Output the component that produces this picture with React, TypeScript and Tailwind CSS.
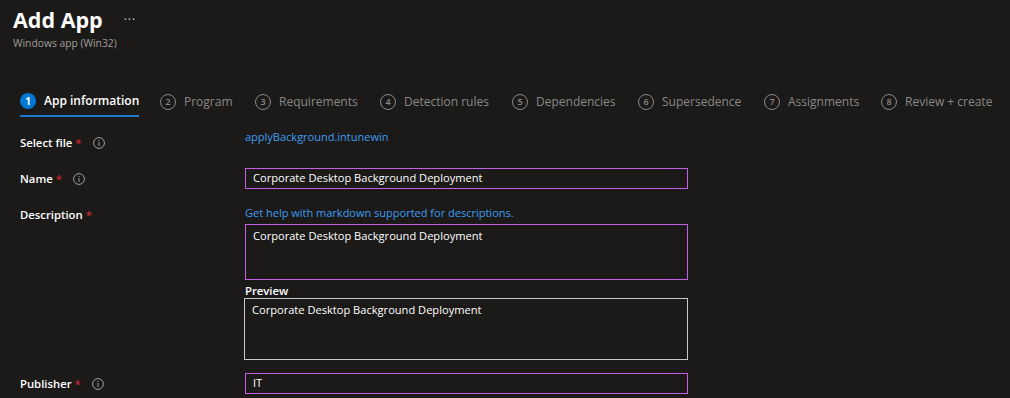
import React from "react";

const FONT = { fontFamily: '"Segoe UI", "Open Sans", "Noto Sans", sans-serif' };

function InfoIcon() {
  return (
    <svg width="12" height="12" viewBox="0 0 12 12" className="shrink-0">
      <circle cx="6" cy="6" r="5.4" fill="none" stroke="#a19f9d" strokeWidth="1" />
      <line x1="6" y1="5" x2="6" y2="9" stroke="#a19f9d" strokeWidth="1" />
      <circle cx="6" cy="3.4" r="0.6" fill="#a19f9d" />
    </svg>
  );
}

function Label({ text, info, pt }: { text: string; info?: boolean; pt: string }) {
  return (
    <div className={`w-[225px] shrink-0 ${pt}`}>
      <div className="flex items-center h-[18px] leading-[18px]">
        <span className="text-[11.3px] font-semibold text-white">{text}</span>
        <span className="text-[11.3px] font-semibold text-[#c8262f] ml-[3px]">*</span>
        {info && (
          <span className="ml-[11px] flex items-center">
            <InfoIcon />
          </span>
        )}
      </div>
    </div>
  );
}

const tabs = [
  { n: 1, label: "App information", w: "w-[140px]", active: true },
  { n: 2, label: "Program", w: "w-[95px]" },
  { n: 3, label: "Requirements", w: "w-[125px]" },
  { n: 4, label: "Detection rules", w: "w-[132px]" },
  { n: 5, label: "Dependencies", w: "w-[126px]" },
  { n: 6, label: "Supersedence", w: "w-[126px]" },
  { n: 7, label: "Assignments", w: "w-[117px]" },
  { n: 8, label: "Review + create", w: "w-[120px]" },
];

export default function App() {
  return (
    <div className="w-[1010px] h-[398px] overflow-hidden bg-[#1b1a19] text-white" style={FONT}>
      {/* Header */}
      <div className="pl-[13px] pt-[4px]">
        <div className="flex items-center h-[32px]">
          <span className="text-[21.5px] leading-[32px] font-bold text-white">Add App</span>
          <span className="ml-[21px] text-[12px] leading-[32px] text-[#d2d0ce] tracking-[1px]">···</span>
        </div>
        <div className="text-[10.3px] leading-[14px] text-[#a19f9d]">Windows app (Win32)</div>
      </div>

      {/* Tabs */}
      <div className="flex pl-[20px] mt-[37px]">
        {tabs.map((t) => (
          <div key={t.n} className={`${t.w} shrink-0`}>
            <div className="inline-flex flex-col">
              <div className="flex items-center h-[28px] gap-[8px]">
                {t.active ? (
                  <span className="w-[16px] h-[16px] rounded-full bg-[#0078d4] text-white text-[10px] font-bold flex items-center justify-center leading-none">
                    {t.n}
                  </span>
                ) : (
                  <span className="w-[16px] h-[16px] rounded-full border border-[#8a8886] text-[#8a8886] text-[9px] font-semibold flex items-center justify-center leading-none">
                    {t.n}
                  </span>
                )}
                <span
                  className={
                    t.active
                      ? "text-[12px] font-semibold text-white whitespace-nowrap"
                      : "text-[12px] text-[#8a8886] whitespace-nowrap"
                  }
                >
                  {t.label}
                </span>
              </div>
              <div className={t.active ? "h-[2px] bg-[#1f7ad0]" : "h-[2px]"} />
            </div>
          </div>
        ))}
      </div>

      {/* Form */}
      <div className="pl-[20px]">
        {/* Select file */}
        <div className="flex mt-[10px]">
          <Label text="Select file" info pt="pt-[6px]" />
          <div className="text-[11px] leading-[18px] text-[#3f9cef]">applyBackground.intunewin</div>
        </div>

        {/* Name */}
        <div className="flex mt-[16px]">
          <Label text="Name" info pt="pt-[2px]" />
          <div className="w-[443px] h-[21px] border border-[#c75ee8] px-[7px] flex items-center text-[11.1px] text-white">
            Corporate Desktop Background Deployment
          </div>
        </div>

        {/* Description */}
        <div className="flex mt-[15px]">
          <Label text="Description" pt="pt-[2px]" />
          <div className="flex flex-col w-[443px]">
            <div className="text-[11px] leading-[18px] text-[#3f9cef]">
              Get help with markdown supported for descriptions.
            </div>
            <div className="mt-[2px] h-[56px] border border-[#c75ee8] px-[7px] pt-[2px] text-[11.1px] leading-[18px] text-white">
              Corporate Desktop Background Deployment
            </div>
            <div className="mt-[3px] h-[15px] leading-[15px] text-[11.3px] font-semibold text-white">Preview</div>
            <div className="-ml-px w-[444px] h-[62px] border border-[#c8c6c4] px-[7px] pt-[2px] text-[11.1px] leading-[18px] text-white">
              Corporate Desktop Background Deployment
            </div>
          </div>
        </div>

        {/* Publisher */}
        <div className="flex mt-[13px]">
          <Label text="Publisher" info pt="pt-[2px]" />
          <div className="w-[443px] h-[21px] border border-[#c75ee8] px-[7px] flex items-center text-[11.1px] text-white">
            IT
          </div>
        </div>
      </div>
    </div>
  );
}
